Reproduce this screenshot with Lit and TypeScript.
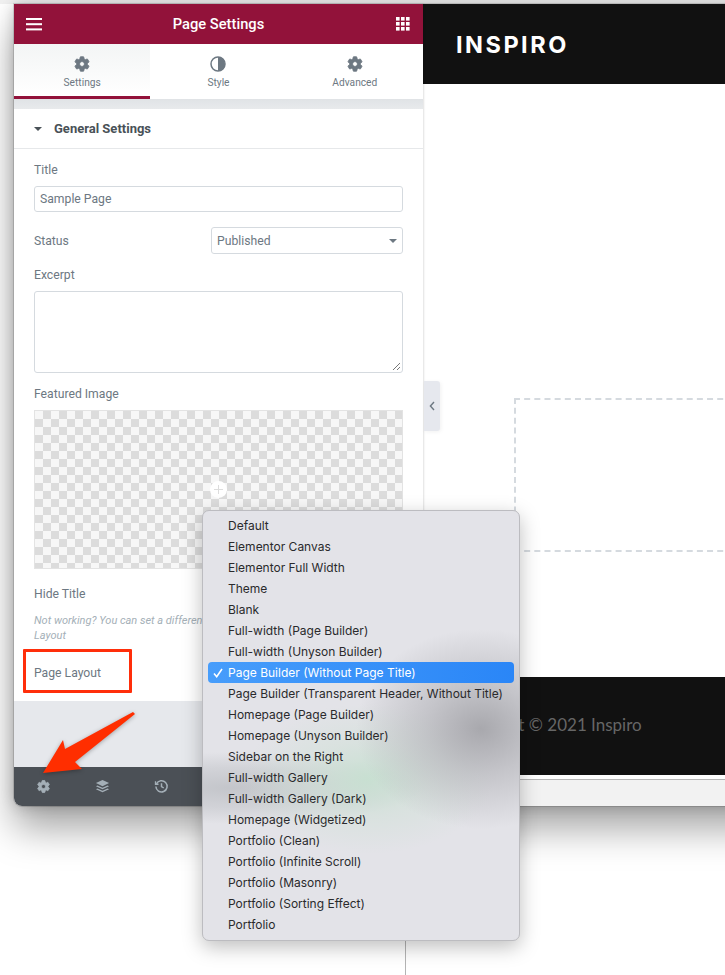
import { LitElement, html, css, svg } from "lit";
import { customElement } from "lit/decorators.js";

const gearPath = "M19.14 12.94c.04-.3.06-.61.06-.94 0-.32-.02-.64-.07-.94l2.03-1.58c.18-.14.23-.41.12-.61l-1.92-3.32c-.12-.22-.37-.29-.59-.22l-2.39.96c-.5-.38-1.03-.7-1.62-.94l-.36-2.54c-.04-.24-.24-.41-.48-.41h-3.84c-.24 0-.43.17-.47.41l-.36 2.54c-.59.24-1.13.57-1.62.94l-2.39-.96c-.22-.08-.47 0-.59.22L2.74 8.87c-.12.21-.08.47.12.61l2.03 1.58c-.05.3-.09.63-.09.94s.02.64.07.94l-2.03 1.58c-.18.14-.23.41-.12.61l1.92 3.32c.12.22.37.29.59.22l2.39-.96c.5.38 1.03.7 1.62.94l.36 2.54c.05.24.24.41.48.41h3.84c.24 0 .44-.17.47-.41l.36-2.54c.59-.24 1.13-.56 1.62-.94l2.39.96c.22.08.47 0 .59-.22l1.92-3.32c.12-.22.07-.47-.12-.61l-2.01-1.58zM12 15.2c-1.77 0-3.2-1.43-3.2-3.2s1.43-3.2 3.2-3.2 3.2 1.43 3.2 3.2-1.43 3.2-3.2 3.2z";

const gear = (size: number) => html`<svg width=${size} height=${size} viewBox="0 0 24 24" fill="currentColor"><path d=${gearPath} stroke="currentColor" stroke-width="1.2"/></svg>`;

const layouts = [
  "Default", "Elementor Canvas", "Elementor Full Width", "Theme", "Blank",
  "Full-width (Page Builder)", "Full-width (Unyson Builder)", "Page Builder (Without Page Title)",
  "Page Builder (Transparent Header, Without Title)", "Homepage (Page Builder)",
  "Homepage (Unyson Builder)", "Sidebar on the Right", "Full-width Gallery", "Full-width Gallery (Dark)",
  "Homepage (Widgetized)", "Portfolio (Clean)", "Portfolio (Infinite Scroll)", "Portfolio (Masonry)",
  "Portfolio (Sorting Effect)", "Portfolio",
];

@customElement("app-root")
export class AppRoot extends LitElement {
  static styles = css`
    :host { display: block; width: 725px; height: 975px; position: relative; overflow: hidden; background: #fff; font-family: Roboto, sans-serif; }
    .stage { height: 975px; padding: 4px 0 0 14px; box-sizing: border-box; background: linear-gradient(#f1f1f1, #f1f1f1) top/100% 4px no-repeat; }
    .backline { position: absolute; left: 405px; top: 800px; width: 1px; height: 175px; background: #b4b4b4; }
    .window { display: flex; height: 802px; width: 760px; border-radius: 0 0 8px 8px; box-shadow: 0 0 0 1px rgba(0,0,0,.12), 0 22px 38px rgba(0,0,0,.36), 0 0 14px rgba(0,0,0,.2); position: relative; background: #fff; }
    .panel { width: 409px; flex: none; display: flex; flex-direction: column; background: #fff; border-radius: 0 0 0 8px; overflow: hidden; box-shadow: 1px 0 2px rgba(0,0,0,.12); position: relative; z-index: 1; }
    .head { height: 40px; flex: none; background: #92123a; color: #fff; display: flex; align-items: center; justify-content: space-between; padding: 0 13px 0 12px; }
    .title { font-size: 14.7px; font-weight: 500; margin-left: -2px; }
    .tabs { display: flex; height: 55px; flex: none; }
    .tab { flex: 1; display: flex; flex-direction: column; align-items: center; color: #6d7882; font-size: 10.2px; padding-top: 11px; box-sizing: border-box; }
    .tab span { margin-top: 4px; }
    .tab.on { background: linear-gradient(#f3f5f5, #fff); border-bottom: 3px solid #92123a; }
    .band { height: 10px; flex: none; background: linear-gradient(#e0e3e6, #e8eaec); }
    .section { height: 39px; flex: none; display: flex; align-items: center; border-bottom: 1px solid #e6e8ea; padding-left: 20px; box-sizing: content-box; color: #495157; font-size: 13px; font-weight: 700; gap: 12px; }
    .caret { width: 0; height: 0; border-left: 4px solid transparent; border-right: 4px solid transparent; border-top: 4px solid #495157; margin-top: 1px; }
    .body { padding: 0 20px; display: flex; flex-direction: column; color: #6d7882; font-size: 12.2px; flex: none; height: 552px; box-sizing: border-box; }
    .lab { height: 14px; line-height: 14px; }
    .field { border: 1px solid #d5dadf; border-radius: 3px; box-sizing: border-box; }
    .input { height: 26px; margin-top: 9px; display: flex; align-items: center; padding-left: 5px; }
    .row { display: flex; align-items: center; justify-content: space-between; margin-top: 15px; }
    .select { width: 192px; height: 27px; display: flex; align-items: center; justify-content: space-between; padding: 0 5px; }
    .select i { width: 0; height: 0; border-left: 4px solid transparent; border-right: 4px solid transparent; border-top: 4px solid #6d7882; }
    .textarea { height: 82px; margin-top: 9px; position: relative; }
    .textarea svg { position: absolute; right: 1px; bottom: 1px; }
    .checker { height: 159px; margin-top: 9px; position: relative; border: 1px solid #e3e3e3; box-sizing: border-box; background-color: #f7f7f7; background-image: conic-gradient(#dcdcdc 25%, #f7f7f7 0 50%, #dcdcdc 0 75%, #f7f7f7 0); background-size: 16px 16px; }
    .plus { position: absolute; left: 175px; top: 70px; width: 17px; height: 17px; border-radius: 50%; background: #fff; }
    .plus::before { content: ""; position: absolute; left: 4px; top: 8px; width: 9px; height: 1px; background: #ddd; }
    .plus::after { content: ""; position: absolute; left: 8px; top: 4px; width: 1px; height: 9px; background: #ddd; }
    .note { color: #a4afb7; font-style: italic; font-size: 11px; line-height: 15px; margin-top: 12px; }
    .fill { height: 66px; flex: none; background: #e6e8ec; }
    .foot { flex: 1; background: #4b5056; color: #a4afb7; display: flex; align-items: center; padding-left: 22px; gap: 44px; }
    .preview { flex: 1; display: flex; flex-direction: column; background: #fff; min-width: 0; overflow: hidden; }
    .site { height: 80px; flex: none; background: #111; color: #fff; display: flex; align-items: center; padding-left: 33px; font: 700 23.5px Inter, sans-serif; letter-spacing: 2.5px; }
    .canvas { flex: 1; padding: 314px 0 0 91px; }
    .dash { height: 154px; box-sizing: border-box; border: 2px dashed #d5dadf; }
    .sitefoot { height: 98px; box-sizing: border-box; padding: 0 0 3px 28px; flex: none; background: #111; color: #666; display: flex; align-items: center; font: 400 17px Lato, sans-serif; white-space: nowrap; }
    .strip { height: 27px; box-sizing: border-box; margin-top: 4px; flex: none; background: #f2f2f2; border-top: 1px solid #b5b5b5; }
    .collapse { position: absolute; left: 410px; top: 377px; width: 16px; height: 50px; background: #e6e8ee; border-radius: 0 3px 3px 0; display: flex; align-items: center; justify-content: center; box-shadow: 1px 1px 4px rgba(0,0,0,.06); z-index: 1; }
    .redbox { position: absolute; z-index: 2; left: 23px; top: 649px; width: 109px; height: 44px; box-sizing: border-box; border: 3px solid #ff2e0a; border-radius: 1px; }
    .arrow { position: absolute; z-index: 2; left: 30px; top: 700px; filter: drop-shadow(0 1px 2px rgba(0,0,0,.3)); }
    .menu { position: absolute; z-index: 3; left: 202px; top: 510px; width: 318px; height: 431px; box-sizing: border-box; padding: 4px 5px; border-radius: 7px; border: 1px solid #bcbcc0; box-shadow: 0 6px 20px rgba(0,0,0,.26);
      background:
        radial-gradient(ellipse 125px 100px at 278px 218px, rgba(165,165,170,.95), rgba(172,172,177,.55) 45%, rgba(190,190,195,0)),
        radial-gradient(ellipse 125px 75px at 165px 268px, rgba(198,224,208,.9), rgba(205,224,212,.45) 50%, rgba(205,224,212,0)),
        radial-gradient(ellipse 190px 36px at 30px 277px, rgba(192,194,199,.9), rgba(192,194,199,.5) 55%, rgba(192,194,199,0)),
        #e3e3e8;
      color: #2a2a2c; font: 400 12px Inter, sans-serif; }
    .item { height: 21px; line-height: 21px; padding-left: 20px; position: relative; white-space: nowrap; }
    .item.sel { background: linear-gradient(90deg, #479dfb, #2a86f7); color: #fff; border-radius: 4px; }
    .item svg { position: absolute; left: 5px; top: 6px; }
  `;

  render() {
    return html`
      <div class="backline"></div>
      <div class="stage">
        <div class="window">
          <aside class="panel">
            <header class="head">
              <svg width="17" height="13" viewBox="0 0 17 13" fill="#fff"><rect y="0" width="16" height="2"/><rect y="5.2" width="16" height="2"/><rect y="10.4" width="16" height="2"/></svg>
              <div class="title">Page Settings</div>
              <svg width="14" height="14" viewBox="0 0 14 14" fill="#fff">
                ${[0, 5, 10].flatMap((y) => [0, 5, 10].map((x) => svg`<rect x=${x} y=${y} width="3.6" height="3.6"/>`))}
              </svg>
            </header>
            <nav class="tabs">
              <div class="tab on">${gear(18)}<span>Settings</span></div>
              <div class="tab">
                <svg width="18" height="18" viewBox="0 0 18 18"><circle cx="9" cy="9" r="7" fill="none" stroke="#6d7882" stroke-width="1.5"/><path d="M9 2a7 7 0 0 1 0 14z" fill="#6d7882"/></svg>
                <span>Style</span>
              </div>
              <div class="tab">${gear(18)}<span>Advanced</span></div>
            </nav>
            <div class="band"></div>
            <div class="section"><i class="caret"></i>General Settings</div>
            <div class="body">
              <div class="lab" style="margin-top:14px">Title</div>
              <div class="field input">Sample Page</div>
              <div class="row"><span>Status</span><div class="field select">Published<i></i></div></div>
              <div class="lab" style="margin-top:14px">Excerpt</div>
              <div class="field textarea">
                <svg width="9" height="9" viewBox="0 0 9 9" stroke="#555" stroke-width=".8"><path d="M1 8 8 1M5 8l3-3"/></svg>
              </div>
              <div class="lab" style="margin-top:14px">Featured Image</div>
              <div class="checker"><div class="plus"></div></div>
              <div class="lab" style="margin-top:18px">Hide Title</div>
              <div class="note">Not working? You can set a different selector for the title<br>Layout</div>
              <div class="lab" style="margin-top:23px">Page Layout</div>
            </div>
            <div class="fill"></div>
            <footer class="foot">
              ${gear(15)}
              <svg width="15" height="15" viewBox="0 0 16 16" fill="currentColor"><path d="M8 1 15 4.3 8 7.6 1 4.3z"/><path d="M2.6 6.8 8 9.3l5.4-2.5L15 7.6 8 10.9 1 7.6z"/><path d="M2.6 10.1 8 12.6l5.4-2.5 1.6.8L8 14.2 1 10.9z"/></svg>
              <svg width="15" height="15" viewBox="0 0 16 16" fill="none" stroke="currentColor" stroke-width="1.6"><path d="M2.6 5.2A6 6 0 1 1 2 8"/><path d="M1.6 2.4v3.2h3.2" stroke-width="1.4"/><path d="M8 4.6V8l2.4 1.6"/></svg>
            </footer>
          </aside>
          <div class="collapse">
            <svg width="6" height="10" viewBox="0 0 6 10" fill="none" stroke="#6d7882" stroke-width="1.4"><path d="M5 1 1.4 5 5 9"/></svg>
          </div>
          <main class="preview">
            <div class="site">INSPIRO</div>
            <div class="canvas"><div class="dash"></div></div>
            <div class="sitefoot">Copyright © 2021 Inspiro</div>
            <div class="strip"></div>
          </main>
        </div>
      </div>
      <div class="redbox"></div>
      <svg class="arrow" width="110" height="80" viewBox="0 0 110 80"><path d="M103 12 105 14 45 62 52 69 13 73 33 40 35 49z" fill="#ff2e00"/></svg>
      <div class="menu">
        ${layouts.map((l, i) => html`<div class="item ${i === 7 ? "sel" : ""}">${i === 7 ? html`<svg width="10" height="10" viewBox="0 0 10 10" fill="none" stroke="#fff" stroke-width="1.6"><path d="M1 5.500 3.700 8.700 9 1"/></svg>` : ""}${l}</div>`)}
      </div>
    `;
  }
}
